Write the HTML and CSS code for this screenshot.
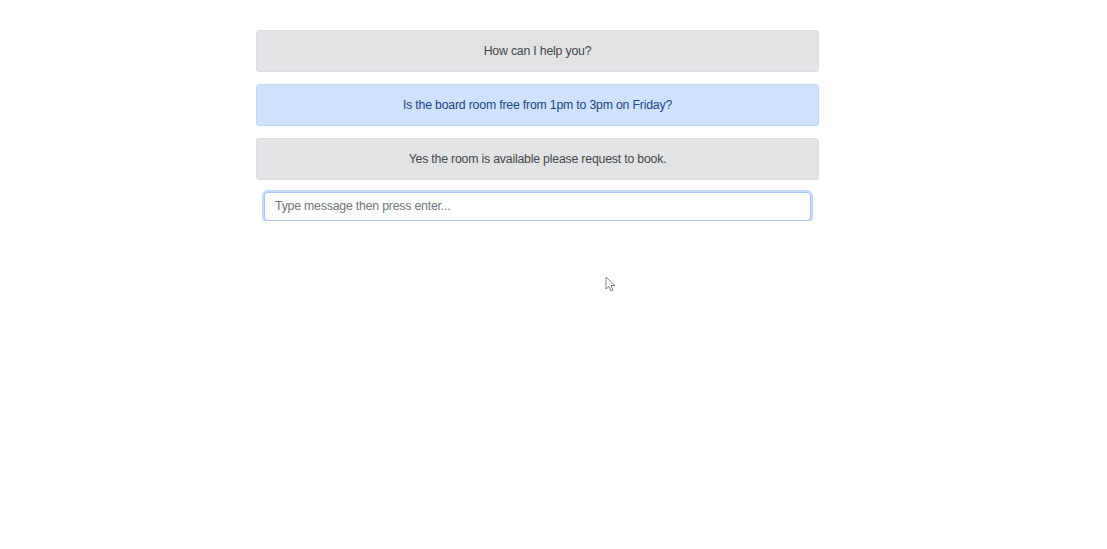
FILE: index.html
```html
<!DOCTYPE html>
<html lang="en">
<head>
<meta charset="utf-8">
<title>Chat</title>
<link rel="stylesheet" href="styles.css">
</head>
<body>
<main class="chat">
  <div class="msg msg-bot">How can I help you?</div>
  <div class="msg msg-user">Is the board room free from 1pm to 3pm on Friday?</div>
  <div class="msg msg-bot">Yes the room is available please request to book.</div>
  <div class="input-row">
    <input class="chat-input" type="text" placeholder="Type message then press enter...">
  </div>
</main>
<svg class="cursor" width="12" height="18" viewBox="0 0 12 18" aria-hidden="true">
  <path d="M1 1 L1 13 L4 10.5 L6 15 L8 14 L6 9.5 L10 9.5 Z" fill="#fff" stroke="#666" stroke-width="0.8"/>
</svg>
</body>
</html>
```
FILE: styles.css
```css
html, body {
  margin: 0;
  padding: 0;
  background: #fff;
}
body {
  font-family: "Liberation Sans", Arial, sans-serif;
  font-size: 12px;
}
.chat {
  width: 563px;
  margin: 30px 0 0 256px;
  display: flex;
  flex-direction: column;
  gap: 12px;
}
.msg {
  box-sizing: border-box;
  height: 42px;
  padding-bottom: 1px;
  display: flex;
  align-items: center;
  justify-content: center;
  border-radius: 3px;
  border: 1px solid;
  font-size: 12.3px;
  letter-spacing: -0.2px;
}
.msg-bot {
  background: #e2e3e5;
  border-color: #dcdde0;
  color: #444649;
}
.msg-user {
  background: #cee2fd;
  border-color: #bcd8fb;
  color: #1b4583;
}
.input-row {
  padding: 0 8px;
}
.chat-input {
  box-sizing: border-box;
  width: 100%;
  height: 29px;
  border: 1px solid #a6c7f5;
  border-radius: 4px;
  box-shadow: 0 0 0 2px #c4d9f8;
  padding: 0 10px 1px;
  font-family: "Liberation Sans", Arial, sans-serif;
  font-size: 12.3px;
  letter-spacing: -0.2px;
  color: #495057;
  outline: none;
}
.chat-input::placeholder {
  color: #6f747a;
}
.cursor {
  position: absolute;
  left: 605px;
  top: 276px;
}
```
